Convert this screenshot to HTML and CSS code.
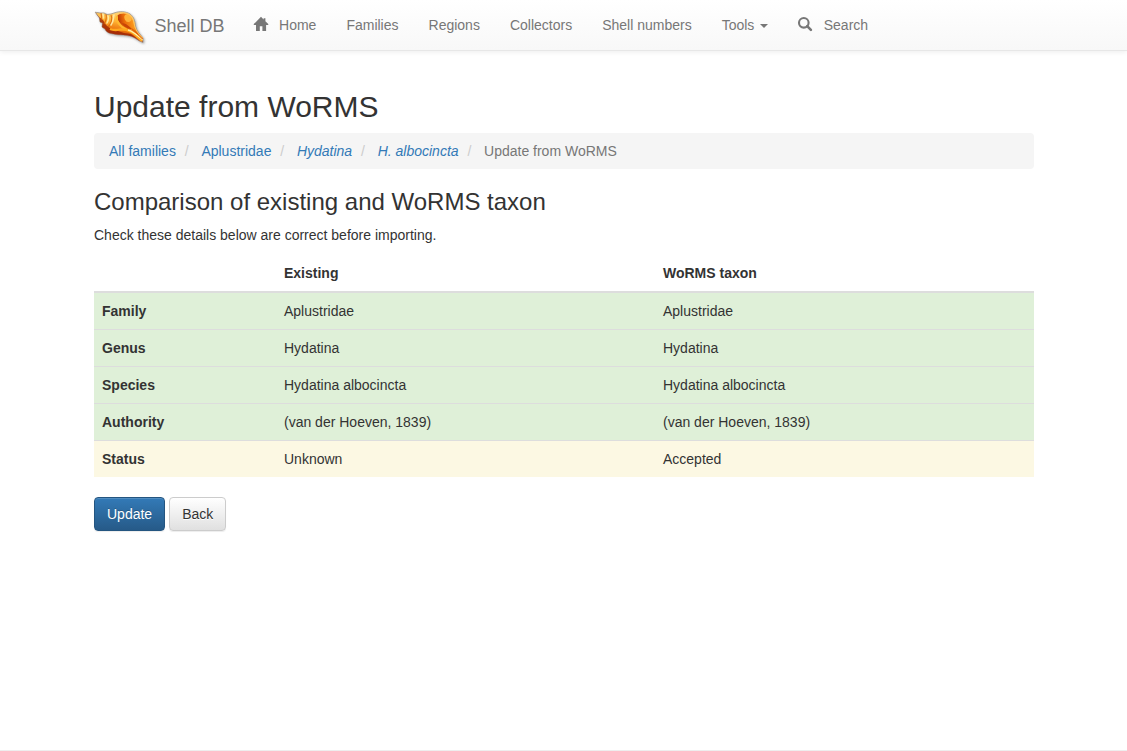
FILE: index.html
```
<!DOCTYPE html>
<html lang="en">
<head>
<meta charset="utf-8">
<title>Update from WoRMS - Shell DB</title>
<link rel="stylesheet" href="styles.css">
</head>
<body>
<nav class="navbar">
  <div class="container navbar-inner">
    <a class="brand" href="#">
      <svg class="logo" width="50" height="36" viewBox="0 0 50 36">
        <defs>
          <linearGradient id="shell" x1=".45" y1="0" x2=".2" y2="1">
            <stop offset="0" stop-color="#ffd77a"/>
            <stop offset=".3" stop-color="#ffb233"/>
            <stop offset=".55" stop-color="#ec750e"/>
            <stop offset=".8" stop-color="#a82a05"/>
            <stop offset="1" stop-color="#6e1204"/>
          </linearGradient>
          <linearGradient id="mouth" x1="0" y1=".5" x2="1" y2=".3">
            <stop offset="0" stop-color="#b02c04"/>
            <stop offset=".4" stop-color="#e96a08"/>
            <stop offset="1" stop-color="#ffa324"/>
          </linearGradient>
          <clipPath id="outline"><path d="M1.200 3.200 6 4 10 4 13 5.500 17 5 21 3.700C26 2 32 2.500 36 5 40 8 41 12 41.500 17 42.500 22 46 25 49 29L49 33.500C44 32 41 28 36 27 30 25.500 24 26.500 17 24.500 14 24 12 22.500 11 20L8 18 8.500 14 6 13 5.500 9Z"/></clipPath>
        </defs>
        <path d="M1.200 3.200 6 4 10 4 13 5.500 17 5 21 3.700C26 2 32 2.500 36 5 40 8 41 12 41.500 17 42.500 22 46 25 49 29L49 33.500C44 32 41 28 36 27 30 25.500 24 26.500 17 24.500 14 24 12 22.500 11 20L8 18 8.500 14 6 13 5.500 9Z" fill="url(#shell)" stroke="#a59b90" stroke-width=".9"/>
        <g clip-path="url(#outline)">
          <path d="M1 3 5 8 9 11 12 16 17 20 24 22 30 24 37 25 48 34 30 29 14 27 6 19 4 10Z" fill="#9b2205" opacity=".8"/>
          <path d="M7 4C8 7 8 9 7 11M12 5C13 9 12 12 10 15M17 6C19 10 17 15 14 18" fill="none" stroke="#d5610a" stroke-width="1.200" opacity=".8"/>
          <path d="M9 5 9.500 9M14 7C15 9 14 12 13 14M20 6C19 9 20 12 17 16" fill="none" stroke="#fff0b0" stroke-width="1.600" stroke-linecap="round" opacity=".85"/>
          <path d="M24 6C29 2 36 4 39 10 41 16 41 21 38 21 33 20 28 17 26 14 24 11 22 9 24 6Z" fill="url(#mouth)"/>
          <ellipse cx="34" cy="9" rx="3.500" ry="4" fill="#ffb43a" transform="rotate(-25 34 9)"/>
          <path d="M28 14C31 14 34 16 38 20 34 20 30 18 28 14Z" fill="#c84506"/>
          <path d="M23 7C22 12 25 17 33 21" fill="none" stroke="#ffb92f" stroke-width="2"/>
          <path d="M16 20C23 23 29 18 35 22 40 24 43 28 48 32" fill="none" stroke="#ffa81f" stroke-width="2.400"/>
          <path d="M34 21C39 22 43 26 49 31" fill="none" stroke="#fff0a5" stroke-width="1.300"/>
          <path d="M38 20C42 23 45 26 49 30" fill="none" stroke="#df6009" stroke-width="1.400"/>
          <path d="M25 4.500C34 2 39 7 40 14 41 20 43 24 49 29" fill="none" stroke="#ffc460" stroke-width="1.200"/>
        </g>
      </svg>
      <span class="brand-name">Shell DB</span>
    </a>
    <ul class="nav">
      <li><a href="#"><svg class="icon" width="14" height="14" viewBox="0 0 14 14"><path fill="currentColor" d="M7-.3 9.600 2.400V1.200h1.800v3L14.500 7.300 14 8.100H12.100V14H8.400V9.300H5.800V14H2V8.100H0L-.4 7.300Z"/></svg>Home</a></li>
      <li><a href="#">Families</a></li>
      <li><a href="#">Regions</a></li>
      <li><a href="#">Collectors</a></li>
      <li><a href="#">Shell numbers</a></li>
      <li><a href="#">Tools <b class="caret"></b></a></li>
      <li><a href="#"><svg class="icon icon-search" width="14" height="14" viewBox="0 0 14 14"><circle cx="5.800" cy="5.800" r="4.800" fill="none" stroke="currentColor" stroke-width="2.100"/><path d="M9.200 9.200 12.900 12.900" stroke="currentColor" stroke-width="2.600" stroke-linecap="round"/></svg>Search</a></li>
    </ul>
  </div>
</nav>
<main class="container">
  <h2>Update from WoRMS</h2>
  <ol class="breadcrumb">
    <li><a href="#">All families</a></li>
    <li><a href="#">Aplustridae</a></li>
    <li><a href="#"><em>Hydatina</em></a></li>
    <li><a href="#"><em>H. albocincta</em></a></li>
    <li class="active">Update from WoRMS</li>
  </ol>
  <h3>Comparison of existing and WoRMS taxon</h3>
  <p>Check these details below are correct before importing.</p>
  <table class="table">
    <thead><tr><th class="col-label"></th><th class="col-existing">Existing</th><th>WoRMS taxon</th></tr></thead>
    <tbody>
      <tr class="success"><th>Family</th><td>Aplustridae</td><td>Aplustridae</td></tr>
      <tr class="success"><th>Genus</th><td>Hydatina</td><td>Hydatina</td></tr>
      <tr class="success"><th>Species</th><td>Hydatina albocincta</td><td>Hydatina albocincta</td></tr>
      <tr class="success"><th>Authority</th><td>(van der Hoeven, 1839)</td><td>(van der Hoeven, 1839)</td></tr>
      <tr class="warning"><th>Status</th><td>Unknown</td><td>Accepted</td></tr>
    </tbody>
  </table>
  <div class="actions">
    <button class="btn btn-primary">Update</button>
    <button class="btn btn-default">Back</button>
  </div>
</main>
<footer class="footer"></footer>
</body>
</html>
```
FILE: styles.css
```
* { box-sizing: border-box; }
body {
  margin: 0;
  height: 751px;
  display: flex;
  flex-direction: column;
  overflow: hidden;
  font: 14px/20px "Liberation Sans", Arial, sans-serif;
  color: #333;
  background: #fff;
}
a { color: #337ab7; text-decoration: none; }
.container { width: 970px; margin: 0 78px 0 79px; padding: 0 15px; }
.navbar {
  flex: none;
  height: 51px;
  border-bottom: 1px solid #e7e7e7;
  background: linear-gradient(#fff, #f8f8f8);
  box-shadow: 0 1px 5px rgba(0, 0, 0, .075);
}
.navbar-inner { display: flex; }
.brand {
  display: flex;
  align-items: center;
  height: 50px;
  padding-right: 14.5px;
  font-size: 18px;
  color: #777;
  text-shadow: 0 1px 0 rgba(255, 255, 255, .25);
}
.logo { margin: 4px 10.5px 0 0; filter: drop-shadow(1px 1px 1px rgba(0, 0, 0, .3)); }
.brand-name { padding-top: 2px; }
.nav { display: flex; margin: 0; padding: 0; list-style: none; }
.nav a { display: block; padding: 15px; color: #777; text-shadow: 0 1px 0 rgba(255, 255, 255, .25); }
.icon { margin: 0 11px -1px 0; overflow: visible; }
.icon-search { margin-right: 11.5px; }
.caret {
  display: inline-block;
  margin-left: 2px;
  vertical-align: middle;
  border: 4px solid transparent;
  border-top-color: currentColor;
  border-bottom: 0;
}
main.container { flex: 1; padding-top: 39px; }
h2, h3 { margin: 0 0 10px; font-weight: 500; line-height: 1.1; }
h2 { font-size: 30px; }
h3 { font-size: 24px; }
p { margin: 0 0 10px; }
.breadcrumb {
  display: flex;
  margin: 0 0 20px;
  padding: 8px 15px;
  list-style: none;
  background: #f5f5f5;
  border-radius: 4px;
}
.breadcrumb li + li::before { content: "/\00a0"; padding: 0 8.85px; color: #ccc; }
.breadcrumb .active { color: #777; }
.table { width: 100%; margin-bottom: 20px; border-collapse: collapse; }
.table th, .table td { padding: 8px; text-align: left; border-top: 1px solid #ddd; }
.table thead th { border-top: 0; border-bottom: 2px solid #ddd; }
.col-label { width: 182px; }
.col-existing { width: 379px; }
.success { background: #dff0d8; }
.warning { background: #fcf8e3; }
.actions { display: flex; gap: 4px; }
.btn {
  height: 34px;
  padding: 6px 12px;
  font: inherit;
  border: 1px solid #ccc;
  border-radius: 4px;
  box-shadow: inset 0 1px 0 rgba(255, 255, 255, .15), 0 1px 1px rgba(0, 0, 0, .075);
}
.btn-primary {
  color: #fff;
  text-shadow: 0 -1px 0 rgba(0, 0, 0, .2);
  background: linear-gradient(#337ab7, #265a88);
  border-color: #245580;
}
.btn-default { color: #333; text-shadow: 0 1px 0 #fff; background: linear-gradient(#fff, #e0e0e0); }
.footer { flex: none; height: 1px; background: #eee; }
```
